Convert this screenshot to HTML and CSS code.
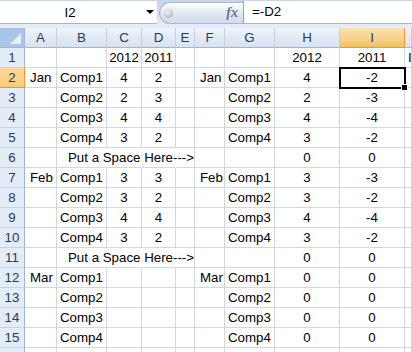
FILE: index.html
```html
<!DOCTYPE html>
<html lang="en">
<head>
    <meta charset="UTF-8">
    <meta name="viewport" content="width=device-width, initial-scale=1.0">
    <title>Sheet1</title>
    <link rel="stylesheet" href="styles.css">
</head>
<body>
    <main class="sheet">
        <div class="toolbar">
            <div class="namebox">
                <span class="nameText">I2</span>
                <span class="drop"></span>
            </div>
            <div class="fxbar">
                <span class="knob"></span>
                <span class="fx">fx</span>
            </div>
            <div class="formula">=-D2</div>
        </div>

        <div class="grid">
            <!-- column headers -->
            <div class="corner"></div>
            <div class="hd">A</div><div class="hd">B</div><div class="hd">C</div><div class="hd">D</div><div class="hd">E</div>
            <div class="hd">F</div><div class="hd">G</div><div class="hd">H</div><div class="hd sel">I</div><div class="hd"></div>

            <div class="rh">1</div>
            <div></div><div></div><div class="n">2012</div><div class="n">2011</div><div></div>
            <div></div><div></div><div class="n">2012</div><div class="n">2011</div><div class="t">I</div>

            <div class="rh sel">2</div>
            <div class="t m">Jan</div><div class="t">Comp1</div><div class="n">4</div><div class="n">2</div><div></div>
            <div class="t m">Jan</div><div class="t">Comp1</div><div class="n">4</div><div class="n cur">-2</div><div></div>

            <div class="rh">3</div>
            <div></div><div class="t">Comp2</div><div class="n">2</div><div class="n">3</div><div></div>
            <div></div><div class="t">Comp2</div><div class="n">2</div><div class="n">-3</div><div></div>

            <div class="rh">4</div>
            <div></div><div class="t">Comp3</div><div class="n">4</div><div class="n">4</div><div></div>
            <div></div><div class="t">Comp3</div><div class="n">4</div><div class="n">-4</div><div></div>

            <div class="rh">5</div>
            <div></div><div class="t">Comp4</div><div class="n">3</div><div class="n">2</div><div></div>
            <div></div><div class="t">Comp4</div><div class="n">3</div><div class="n">-2</div><div></div>

            <div class="rh">6</div>
            <div></div><div class="spill open">Put a Space Here---&gt;</div><div class="open"></div><div class="open"></div><div></div>
            <div></div><div></div><div class="n">0</div><div class="n">0</div><div></div>

            <div class="rh">7</div>
            <div class="t m">Feb</div><div class="t">Comp1</div><div class="n">3</div><div class="n">3</div><div></div>
            <div class="t m">Feb</div><div class="t">Comp1</div><div class="n">3</div><div class="n">-3</div><div></div>

            <div class="rh">8</div>
            <div></div><div class="t">Comp2</div><div class="n">3</div><div class="n">2</div><div></div>
            <div></div><div class="t">Comp2</div><div class="n">3</div><div class="n">-2</div><div></div>

            <div class="rh">9</div>
            <div></div><div class="t">Comp3</div><div class="n">4</div><div class="n">4</div><div></div>
            <div></div><div class="t">Comp3</div><div class="n">4</div><div class="n">-4</div><div></div>

            <div class="rh">10</div>
            <div></div><div class="t">Comp4</div><div class="n">3</div><div class="n">2</div><div></div>
            <div></div><div class="t">Comp4</div><div class="n">3</div><div class="n">-2</div><div></div>

            <div class="rh">11</div>
            <div></div><div class="spill open">Put a Space Here---&gt;</div><div class="open"></div><div class="open"></div><div></div>
            <div></div><div></div><div class="n">0</div><div class="n">0</div><div></div>

            <div class="rh">12</div>
            <div class="t m">Mar</div><div class="t">Comp1</div><div></div><div></div><div></div>
            <div class="t m">Mar</div><div class="t">Comp1</div><div class="n">0</div><div class="n">0</div><div></div>

            <div class="rh">13</div>
            <div></div><div class="t">Comp2</div><div></div><div></div><div></div>
            <div></div><div class="t">Comp2</div><div class="n">0</div><div class="n">0</div><div></div>

            <div class="rh">14</div>
            <div></div><div class="t">Comp3</div><div></div><div></div><div></div>
            <div></div><div class="t">Comp3</div><div class="n">0</div><div class="n">0</div><div></div>

            <div class="rh">15</div>
            <div></div><div class="t">Comp4</div><div></div><div></div><div></div>
            <div></div><div class="t">Comp4</div><div class="n">0</div><div class="n">0</div><div></div>

            <!-- row 16, only its top edge is in view -->
            <div class="rh"></div>
            <div></div><div></div><div></div><div></div><div></div>
            <div></div><div></div><div></div><div></div><div></div>
        </div>
    </main>
</body>
</html>
```

FILE: styles.css
```css
html, body {
  margin: 0;
  padding: 0;
  background-color: #fff;
  overflow: hidden;
}

.sheet {
  width: 412px;
  height: 352px;
  overflow: hidden;
  font-family: "Liberation Sans", Arial, sans-serif;
  font-size: 13.3px;
  color: #000;
}

/* formula bar */
.toolbar {
  height: 28px;
  display: flex;
  align-items: flex-start;
  box-sizing: border-box;
  padding-top: 1px;
  background: linear-gradient(#c8d6e8 0, #c8d6e8 1px, #e3ebf6 24px, #e8eef8 28px);
}

.namebox {
  width: 157px;
  height: 23px;
  box-sizing: border-box;
  background: #fff;
  border-bottom: 1px solid #a6b6ca;
  display: flex;
  align-items: center;
  position: relative;

  .nameText {
    width: 140px;
    text-align: center;
  }

  .drop {
    width: 0;
    height: 0;
    border-left: 4px solid transparent;
    border-right: 4px solid transparent;
    border-top: 4px solid #000;
    margin-left: 6px;
  }
}

.fxbar {
  width: 86px;
  height: 22px;
  margin-top: 1px;
  box-sizing: border-box;
  border: 1px solid #a9b9cd;
  border-right-color: #8fa4bf;
  border-radius: 11px 0 0 11px;
  background: linear-gradient(#ffffff, #dbe5f1 60%, #cfdcec);
  display: flex;
  align-items: center;
  margin-left: 2px;
  margin-right: -2px;

  .knob {
    width: 9px;
    height: 9px;
    border-radius: 50%;
    margin-left: 4px;
    background: radial-gradient(circle at 40% 35%, #f4f4f4, #b8bcc2 70%, #9da2a8);
  }

  .fx {
    margin-left: auto;
    margin-right: 6px;
    font-family: "Liberation Serif", serif;
    font-style: italic;
    font-weight: bold;
    font-size: 14px;
    color: #6c7686;
  }
}

.formula {
  flex: 1;
  height: 23px;
  box-sizing: border-box;
  background: #fff;
  border-left: 1px solid #8fa4bf;
  border-bottom: 1px solid #a6b6ca;
  padding-left: 8px;
  line-height: 22px;
}

/* cells */
.grid {
  display: grid;
  grid-template-columns: 25px 32px 50px 35px 34px 19px 30px 50px 65px 65px 1fr;
  grid-auto-rows: 20px;
  background: #fff;

  > div {
    box-sizing: border-box;
    border-right: 1px solid #d0d7e5;
    border-bottom: 1px solid #d0d7e5;
    line-height: 19px;
    white-space: nowrap;
    overflow: hidden;
  }

  .t {
    padding-left: 3px;
  }

  .m {
    padding-left: 5px;
  }

  .n {
    text-align: center;
  }

  .open {
    border-right-color: transparent;
  }

  .spill {
    overflow: visible;
    padding-left: 11px;
  }

  .corner {
    background: #a9c4e9;
    border-right: 1px solid #9eb6ce;
    border-bottom: 1px solid #9eb6ce;
    position: relative;
  }

  .corner::after {
    content: "";
    position: absolute;
    right: 3px;
    bottom: 3px;
    width: 0;
    height: 0;
    border-left: 11px solid transparent;
    border-bottom: 11px solid #e9f0fa;
  }

  .hd {
    text-align: center;
    color: #1f3b5e;
    background: linear-gradient(#f1f5fb, #e2eaf5 50%, #d9e3f1);
    border-right: 1px solid #c3d0e2;
    border-bottom: 1px solid #9eb6ce;
  }

  .hd.sel {
    background: linear-gradient(#fbe3b4, #f7d38c 50%, #f1c15f);
    border-right-color: #f29536;
    border-bottom-color: #f29536;
  }

  .rh {
    text-align: center;
    color: #1f3b5e;
    background: #e4ecf7;
    border-right: 1px solid #9eb6ce;
    border-bottom: 1px solid #c5d3e4;
  }

  .rh.sel {
    background: linear-gradient(#f9d99a, #f6cd7a);
    border-bottom-color: #f29536;
    border-right-color: #f29536;
  }

  .cur {
    position: relative;
    overflow: visible;
  }

  .cur::before {
    content: "";
    position: absolute;
    left: -1px;
    top: -1px;
    width: 67px;
    height: 22px;
    box-sizing: border-box;
    border: 2px solid #000;
  }

  .cur::after {
    content: "";
    position: absolute;
    right: -4px;
    bottom: -4px;
    width: 5px;
    height: 5px;
    background: #000;
    border: 1px solid #fff;
  }
}
```
